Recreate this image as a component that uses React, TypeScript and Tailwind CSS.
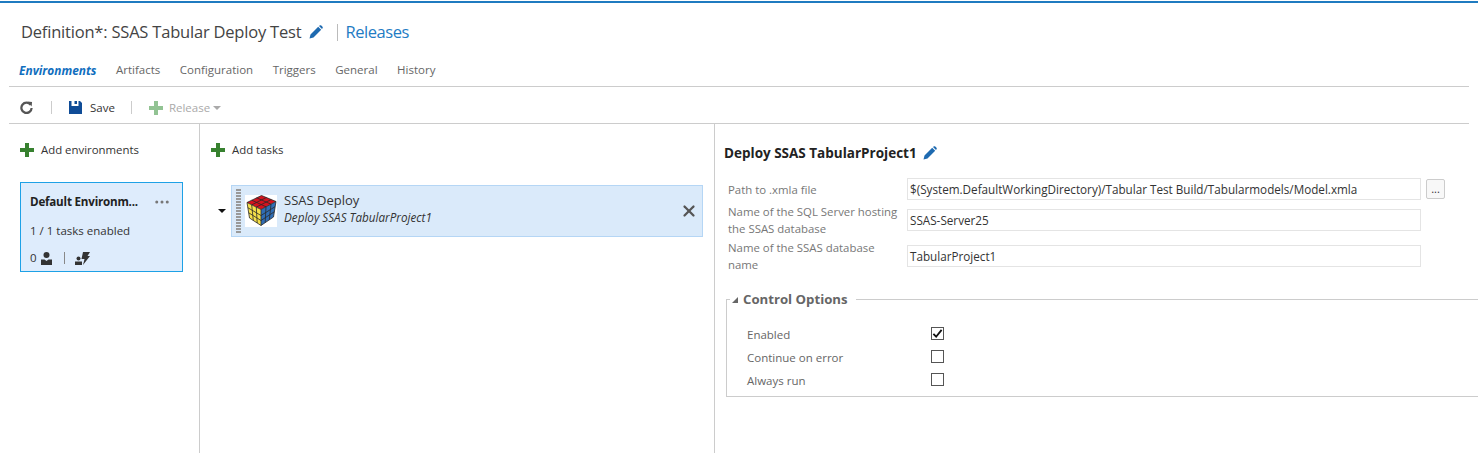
import { MoreHorizontal, X } from "lucide-react";

const FONT = "font-['Open_Sans','Noto_Sans',sans-serif]";

function Pencil({ className }: { className: string }) {
  return (
    <svg viewBox="0 0 14 14" className={className}>
      <path d="M0.5 13.5 L1.5 9.5 L9.2 1.8 L12.2 4.8 L4.5 12.5 Z M10 1 L11 0.3 Q11.7 0 12.3 0.5 L13.5 1.7 Q14 2.3 13.7 3 L13 4 Z" fill="#1e6ab0" />
    </svg>
  );
}

function Plus({ className }: { className: string }) {
  return (
    <svg viewBox="0 0 14 14" className={className}>
      <path d="M5 0h4v5h5v4H9v5H5V9H0V5h5z" fill="currentColor" />
    </svg>
  );
}

function Cube() {
  return (
    <svg viewBox="0 0 32 32" className="w-[32px] h-[32px] bg-white shrink-0">
      <path d="M16.5 0.5 L31 6.5 L16 14.5 L2 7.5 Z" fill="#d5121e" />
      <path d="M2 7.5 L16 14.5 L16 30.5 L4.5 23 Z" fill="#f6e04a" />
      <path d="M16 14.5 L31 6.5 L28.5 22 L16 30.5 Z" fill="#2f6db5" />
      <path
        d="M16.5 0.5 L31 6.5 L28.5 22 L16 30.5 L4.5 23 L2 7.5 Z M2 7.5 L16 14.5 L31 6.5 M16 14.5 L16 30.5
           M6.7 9.9 L8.3 25.5 M11.3 12.1 L12.2 28 M2.8 12.7 L16 20.5 M3.7 17.8 L16 25.5
           M21 11.8 L20.2 27.5 M26 9.2 L24.3 24.8 M16 20.5 L30 11.7 M16 25.5 L29.3 16.8
           M6.8 5.2 L21 11.8 M11.7 2.8 L26 9.2 M6.7 9.9 L21.3 2.5 M11.3 12.1 L26.2 4.5"
        stroke="#2a2a2a"
        strokeWidth="0.8"
        fill="none"
      />
    </svg>
  );
}

function Check({ checked }: { checked?: boolean }) {
  return (
    <span className="w-[13px] h-[13px] -mt-[2px] border border-[#555] bg-white flex items-center justify-center">
      {checked && (
        <svg viewBox="0 0 12 12" className="w-[11px] h-[11px]">
          <path d="M1.5 6.5 L4.5 9.5 L10.5 2" stroke="#111" strokeWidth="2" fill="none" />
        </svg>
      )}
    </span>
  );
}

const TABS = ["Artifacts", "Configuration", "Triggers", "General", "History"];
const OPTIONS = [
  { label: "Enabled", checked: true },
  { label: "Continue on error", checked: false },
  { label: "Always run", checked: false },
];

function Field({ label, value, h }: { label: string; value: string; h: string }) {
  return (
    <div className={`flex items-center ${h}`}>
      <div className="w-[179px] text-[11.4px] leading-[17px] text-[#777]">{label}</div>
      <div className="w-[514px] h-[22px] border border-[#e4e4e4] px-[2px] text-[11.7px] leading-[20px] text-[#333] whitespace-nowrap overflow-hidden">
        {value}
      </div>
    </div>
  );
}

export default function App() {
  return (
    <div className={`${FONT} w-[1478px] h-[453px] bg-white overflow-hidden flex flex-col`}>
      <div className="mt-px h-[2px] bg-[#1f7bc0] shrink-0" />
      <div className="h-[59px] pl-[21px] pt-[13px] pb-[14px] flex items-center shrink-0">
        <span className="text-[16.5px] text-[#444] tracking-[-0.2px]">Definition*: SSAS Tabular Deploy Test</span>
        <Pencil className="w-[14px] h-[14px] ml-[8px]" />
        <span className="ml-[14px] w-px h-[17px] bg-[#bbb]" />
        <span className="ml-[7px] text-[16.5px] text-[#1f7cc4] tracking-[-0.45px]">Releases</span>
      </div>
      <div className="mx-[9px] h-[25px] border-b border-[#ccc] flex items-start pl-[10px] shrink-0 text-[11.5px] leading-[16px] gap-[19.5px]">
        <span className="font-bold italic text-[#106ebe] text-[11.9px]">Environments</span>
        {TABS.map((t) => (
          <span key={t} className="text-[#666]">{t}</span>
        ))}
      </div>
      <div className="mx-[9px] h-[37px] pt-[5px] border-b border-[#ccc] flex items-center pl-[11px] shrink-0 text-[11.5px]">
        <svg viewBox="0 0 14 14" className="w-[13px] h-[13px]">
          <path d="M11.5 4.2 A5.5 5.5 0 1 0 12.5 7.5" stroke="#555" strokeWidth="2.4" fill="none" />
          <path d="M8 0.5 L13 1 L12.5 6 Z" fill="#555" />
        </svg>
        <span className="ml-[18px] w-px h-[13px] bg-[#ccc]" />
        <svg viewBox="0 0 13 13" className="w-[13px] h-[13px] ml-[17px]">
          <path d="M0 0h2.5v5h7V0H11l2 2v11H0z" fill="#0f4c97" />
          <path d="M5.5 0h2.5v3H5.500z" fill="#0f4c97" />
        </svg>
        <span className="ml-[8px] text-[#333]">Save</span>
        <span className="ml-[16px] w-px h-[13px] bg-[#ccc]" />
        <Plus className="w-[14px] h-[14px] ml-[17px] text-[#92c393]" />
        <span className="ml-[6px] text-[#aaa]">Release</span>
        <span className="ml-[3px] w-0 h-0 border-x-[4px] border-x-transparent border-t-[4px] border-t-[#aaa]" />
      </div>
      <div className="flex-1 flex min-h-0">
        <div className="w-[200px] border-r border-[#ccc] shrink-0 pl-[20px]">
          <div className="mt-[19px] flex items-center h-[14px]">
            <Plus className="w-[14px] h-[14px] text-[#37812f]" />
            <span className="ml-[7px] text-[11.4px] text-[#333]">Add environments</span>
          </div>
          <div className="mt-[25px] w-[163px] h-[90px] bg-[#deecfc] border border-[#1ea1e6] pl-[9px] pr-[11px] pt-[11px]">
            <div className="flex items-center justify-between h-[16px]">
              <span className="text-[11.6px] font-bold text-[#222] tracking-[-0.2px]">Default Environm...</span>
              <MoreHorizontal className="w-[18px] h-[18px] text-[#777]" />
            </div>
            <div className="mt-[13px] text-[11.5px] text-[#333] leading-[16px]">1 / 1 tasks enabled</div>
            <div className="mt-[12px] flex items-center text-[11.5px] text-[#333] h-[14px]">
              0
              <svg viewBox="0 0 11 13" className="w-[11px] h-[13px] ml-[4px]">
                <circle cx="5.5" cy="3" r="3" fill="#333" />
                <path d="M0 13V7.5h3.5L5.5 9l2-1.5H11V13z" fill="#333" />
              </svg>
              <span className="ml-[12px] w-px h-[12px] bg-[#888]" />
              <svg viewBox="0 0 15 13" className="w-[15px] h-[13px] ml-[10px]">
                <circle cx="3.5" cy="6.500" r="2" fill="#333" />
                <path d="M0 13V9.5h7V13z" fill="#333" />
                <path d="M8 0h7l-2.5 4H15L8 13l1.500-6H6.500z" fill="#333" />
              </svg>
            </div>
          </div>
        </div>
        <div className="w-[515px] border-r border-[#ccc] shrink-0 pl-[11px]">
          <div className="mt-[19px] flex items-center h-[14px]">
            <Plus className="w-[14px] h-[14px] text-[#37812f]" />
            <span className="ml-[7px] text-[11.4px] text-[#333]">Add tasks</span>
          </div>
          <div className="mt-[28px] flex items-center">
            <span className="ml-[7px] w-0 h-0 border-x-[4px] border-x-transparent border-t-[4px] border-t-[#111]" />
            <div className="ml-[5px] w-[472px] h-[52px] bg-[#daeafa] border border-[#b5d6f5] flex items-center pl-[4px] pr-[4px]">
              <div className="w-[5px] h-[44px] bg-[repeating-linear-gradient(0deg,#999_0,#999_2px,transparent_2px,transparent_3px)] shrink-0" />
              <div className="ml-[4px]"><Cube /></div>
              <div className="ml-[7px] flex-1 min-w-0 text-[#333] -mt-[4px]">
                <div className="text-[13px] leading-[15px]">SSAS Deploy</div>
                <div className="text-[11.7px] leading-[18px] italic">Deploy SSAS TabularProject1</div>
              </div>
              <X className="w-[18px] h-[18px] text-[#555]" strokeWidth={3} />
            </div>
          </div>
        </div>
        <div className="flex-1 min-w-0 pl-[9px]">
          <div className="mt-[20px] flex items-center h-[18px]">
            <span className="text-[13.5px] font-bold text-[#222]">Deploy SSAS TabularProject1</span>
            <Pencil className="w-[14px] h-[14px] ml-[6px]" />
          </div>
          <div className="mt-[15px] pl-[4px]">
            <div className="flex items-center">
              <Field label="Path to .xmla file" value="$(System.DefaultWorkingDirectory)/Tabular Test Build/Tabularmodels/Model.xmla" h="h-[24px]" />
              <div className="ml-[5px] w-[19px] h-[20px] border border-[#ccc] rounded-[2px] bg-[#f8f8f8] text-[11px] leading-[18px] text-center text-[#333]">...</div>
            </div>
            <Field label="Name of the SQL Server hosting the SSAS database" value="SSAS-Server25" h="h-[37px]" />
            <Field label="Name of the SSAS database name" value="TabularProject1" h="h-[34px] mt-[1px]" />
          </div>
          <fieldset className="mt-[17px] border-t border-l border-b border-[#ccc] h-[107px] ml-[2px]">
            <legend className="ml-[3px] px-[2px] pr-[8px] flex items-center text-[13.2px] font-bold text-[#666]">
              <span className="w-0 h-0 border-l-[6px] border-l-transparent border-b-[6px] border-b-[#666] mr-[5px]" />
              Control Options
            </legend>
            <div className="pt-[13px] pl-[20px]">
              {OPTIONS.map((o) => (
                <div key={o.label} className="flex items-center h-[23px] text-[11.5px] text-[#666]">
                  <span className="w-[184px]">{o.label}</span>
                  <Check checked={o.checked} />
                </div>
              ))}
            </div>
          </fieldset>
        </div>
      </div>
    </div>
  );
}
